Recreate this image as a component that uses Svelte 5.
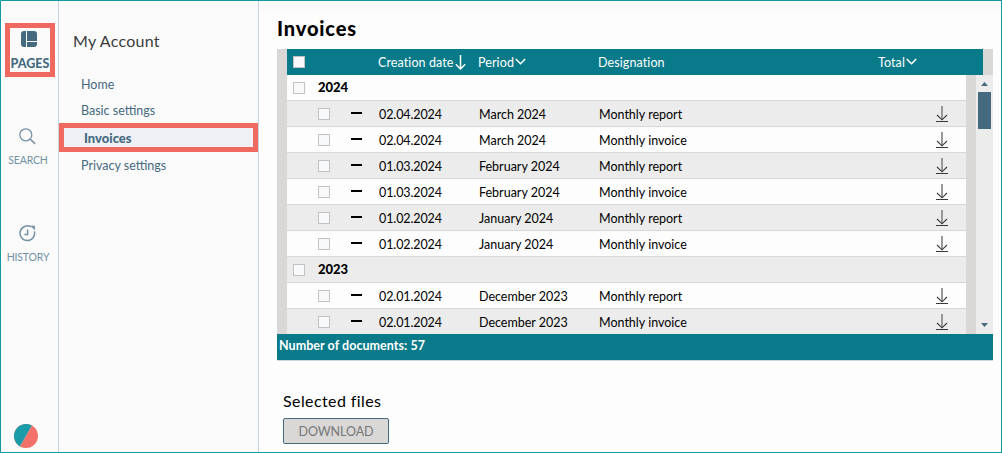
<script>
  const links = ["Home", "Basic settings", "Invoices", "Privacy settings"];
  let activeLink = $state("Invoices");

  const years = [
    {
      year: "2024",
      documents: [
        { date: "02.04.2024", period: "March 2024", name: "Monthly report" },
        { date: "02.04.2024", period: "March 2024", name: "Monthly invoice" },
        { date: "01.03.2024", period: "February 2024", name: "Monthly report" },
        { date: "01.03.2024", period: "February 2024", name: "Monthly invoice" },
        { date: "01.02.2024", period: "January 2024", name: "Monthly report" },
        { date: "01.02.2024", period: "January 2024", name: "Monthly invoice" },
      ],
    },
    {
      year: "2023",
      documents: [
        { date: "02.01.2024", period: "December 2023", name: "Monthly report" },
        { date: "02.01.2024", period: "December 2023", name: "Monthly invoice" },
      ],
    },
  ];
  const total = 57;
</script>

<div class="app">
  <nav class="rail">
    <button class="rail-item pages">
      <svg width="16" height="16" viewBox="0 0 16 16" fill="#456a7f">
        <path d="M3 0H5V16H3Q0 16 0 13V3Q0 0 3 0Z" />
        <path d="M6 0H13Q16 0 16 3V10H6Z" />
        <path d="M6 11H16V13Q16 16 13 16H6Z" />
      </svg>
      <span>PAGES</span>
    </button>
    <button class="rail-item search">
      <svg width="17" height="17" viewBox="0 0 17 17" fill="none" stroke="#7392a3" stroke-width="1.3">
        <circle cx="6.8" cy="6.8" r="6" />
        <path d="M11 11L16.2 15.8" stroke-width="1.6" />
      </svg>
      <span>SEARCH</span>
    </button>
    <button class="rail-item history">
      <svg width="17" height="17" viewBox="0 0 17 17" fill="none" stroke="#7392a3" stroke-width="1.5">
        <path d="M12 1.9A7.3 7.3 0 1 0 15.4 6.4" />
        <path d="M8.6 4.5V9.6H5.4" />
        <path d="M11.8 1H15.6V4.8Z" fill="#7392a3" stroke-width="0.6" />
      </svg>
      <span>HISTORY</span>
    </button>
    <svg class="logo" width="24" height="24" viewBox="0 0 24 24">
      <circle cx="12" cy="12" r="12" fill="#f37168" />
      <path d="M18 1.6A12 12 0 1 0 6 22.4Z" fill="#1a9ba8" />
      <path d="M18 1.6L6 22.4" stroke="#b5a49f" stroke-width="0.7" />
    </svg>
  </nav>

  <aside class="menu">
    <h2>My Account</h2>
    {#each links as link}
      <button class="link" class:active={link === activeLink} onclick={() => (activeLink = link)}>
        {link}
      </button>
    {/each}
  </aside>

  <main>
    <h1>Invoices</h1>
    <div class="table">
      <div class="head">
        <div class="row head-row">
          <span class="check"></span>
          <span class="sortable">
            Creation date
            <svg width="11" height="17" viewBox="0 0 11 17" fill="none" stroke="#fff" stroke-width="1.5">
              <path d="M5.5 1V15M0.8 10.3L5.5 15L10.2 10.3" />
            </svg>
          </span>
          <span class="sortable">
            Period
            <svg width="11" height="8" viewBox="0 0 11 8" fill="none" stroke="#fff" stroke-width="1.6">
              <path d="M0.8 1L5.5 5.7L10.2 1" />
            </svg>
          </span>
          <span>Designation</span>
          <span class="sortable">
            Total
            <svg width="11" height="8" viewBox="0 0 11 8" fill="none" stroke="#fff" stroke-width="1.6">
              <path d="M0.8 1L5.5 5.7L10.2 1" />
            </svg>
          </span>
        </div>
      </div>
      <div class="body">
        <div class="rows">
          {#each years as group}
            <div class="row year">
              <span class="check"></span>
              <b>{group.year}</b>
            </div>
            {#each group.documents as doc}
              <div class="row doc">
                <span class="check"></span>
                <span class="dash"></span>
                <span class="text date">{doc.date}</span>
                <span class="text">{doc.period}</span>
                <span class="text">{doc.name}</span>
                <svg width="12" height="16" viewBox="0 0 12 16" fill="none" stroke="#3a3a3a">
                  <path d="M6 0V13.5" stroke="#8f8f8f" stroke-width="1.8" />
                  <path d="M1 9L6 13.8L11 9" stroke-width="1.1" />
                  <path d="M0 15.5H12" />
                </svg>
              </div>
            {/each}
          {/each}
        </div>
        <div class="scrollbar">
          <svg width="7" height="4" viewBox="0 0 7 4"><path d="M0 4L3.5 0L7 4Z" fill="#456a7f" /></svg>
          <div class="thumb"></div>
          <svg class="down" width="7" height="4" viewBox="0 0 7 4"><path d="M0 0L3.5 4L7 0Z" fill="#456a7f" /></svg>
        </div>
      </div>
      <div class="foot">Number of documents: {total}</div>
    </div>
    <h3>Selected files</h3>
    <button class="download">DOWNLOAD</button>
  </main>
</div>

<style>
  :global(body) {
    margin: 0;
    background: #fdfdfd;
  }

  .app {
    box-sizing: border-box;
    display: flex;
    width: 1002px;
    height: 453px;
    border: 1px solid #129aa6;
    background: #fafafa;
    font-family: Lato, sans-serif;
    font-size: 12.5px;
    color: #000;
  }

  button {
    margin: 0;
    padding: 0;
    border: 0;
    background: none;
    font: inherit;
    color: inherit;
    cursor: pointer;
  }

  svg {
    display: block;
    flex: none;
  }

  h1, h2, h3 {
    margin: 0;
    white-space: nowrap;
  }

  .rail {
    box-sizing: border-box;
    display: flex;
    flex-direction: column;
    width: 58px;
    padding: 22px 0 4px 4px;
    border-right: 1px solid #c8d4df;
  }

  .rail-item {
    box-sizing: border-box;
    display: flex;
    flex-direction: column;
    align-items: center;
    width: 50px;
    color: #7392a3;
    font-size: 10.5px;
    line-height: 14px;
    letter-spacing: -0.15px;
  }

  .pages {
    height: 54px;
    padding-top: 3px;
    border: 5px solid #ef6961;
    color: #456a7f;
    font-size: 12.5px;
    font-weight: 900;
    letter-spacing: 0;
  }

  .pages svg {
    margin-left: -3px;
  }

  .pages span {
    margin-top: 10px;
  }

  .search {
    margin-top: 51px;
    width: 46px;
  }

  .search svg,
  .history svg {
    margin-left: -2px;
  }

  .search span {
    margin-top: 8px;
  }

  .history {
    margin-top: 57px;
    width: 46px;
  }

  .history svg {
    margin-top: 1px;
  }

  .history span {
    margin-top: 8px;
  }

  .logo {
    margin: auto 0 0 9px;
  }

  .menu {
    box-sizing: border-box;
    display: flex;
    flex-direction: column;
    width: 200px;
    border-right: 1px solid #c8d4df;
    color: #456a7f;
  }

  h2 {
    margin: 30px 0 20px 14px;
    font-size: 16px;
    font-weight: 400;
    line-height: 20px;
    color: #3c3c3c;
    letter-spacing: 0.25px;
  }

  .link {
    box-sizing: border-box;
    height: 26px;
    padding-left: 22px;
    text-align: left;
    line-height: 28px;
    white-space: nowrap;
  }

  .link.active {
    height: 29px;
    padding-left: 20px;
    border: 5px solid #ef6961;
    background: #eff1f6;
    font-size: 13px;
    font-weight: 900;
    line-height: 20px;
  }

  main {
    flex: 1;
    margin-top: 12px;
    padding-left: 18px;
    background: #fdfdfd;
  }

  h1 {
    height: 36px;
    font-size: 20px;
    font-weight: 900;
    line-height: 30px;
    letter-spacing: 0.85px;
  }

  .table {
    width: 716px;
    border-bottom: 1px solid #ccd8dc;
  }

  .head {
    height: 26px;
    padding: 0 10px;
    background: #d9d8d6;
    color: #fff;
  }

  .row {
    box-sizing: border-box;
    display: grid;
    align-items: center;
    height: 26px;
    white-space: nowrap;
  }

  .head-row {
    grid-template-columns: 85px 100px 120px 280px 1fr;
    padding-left: 6px;
    background: #087a8a;
    letter-spacing: 0.1px;
  }

  .sortable {
    display: flex;
    align-items: center;
    gap: 1px;
  }

  .check {
    box-sizing: border-box;
    width: 12px;
    height: 12px;
    border: 1px solid #c4c2c0;
    background: #f8f9fb;
  }

  .body {
    display: flex;
    height: 259px;
    overflow: hidden;
  }

  .rows {
    width: 679px;
    border: solid #d9d8d6;
    border-width: 0 10px;
  }

  .year,
  .doc {
    border-bottom: 1px solid #d7d7d7;
    background: #fdfdfd;
  }

  .row:nth-child(even) {
    background: #ececec;
  }

  .year {
    grid-template-columns: 25px 1fr;
    padding-left: 6px;
  }

  .year b {
    margin-bottom: 2px;
    font-size: 13px;
    font-weight: 900;
  }

  .doc {
    grid-template-columns: 33px 28px 100px 120px 337px 12px;
    padding-left: 31px;
  }

  .text {
    padding-top: 1px;
  }

  .date {
    letter-spacing: -0.1px;
  }

  .dash {
    width: 11px;
    height: 2px;
    margin-bottom: 1px;
    background: #000;
  }

  .scrollbar {
    display: flex;
    flex-direction: column;
    align-items: center;
    box-sizing: border-box;
    width: 17px;
    padding: 7px 0;
    background: #ececec;
  }

  .thumb {
    width: 13px;
    height: 37px;
    margin-top: 6px;
    background: #456a7f;
  }

  .down {
    margin-top: auto;
  }

  .foot {
    height: 26px;
    padding-left: 2px;
    background: #087a8a;
    color: #fff;
    font-weight: 700;
    line-height: 24px;
    letter-spacing: 0.05px;
  }

  h3 {
    margin: 30px 0 7px 6px;
    font-size: 16px;
    font-weight: 400;
    line-height: 20px;
    letter-spacing: 0.4px;
  }

  .download {
    box-sizing: border-box;
    width: 106px;
    height: 26px;
    margin-left: 6px;
    padding-top: 1px;
    border: 1px solid #456a7f;
    border-radius: 2px;
    background: #d9d8d6;
    color: #777;
    line-height: 23px;
    letter-spacing: -0.1px;
  }
</style>
